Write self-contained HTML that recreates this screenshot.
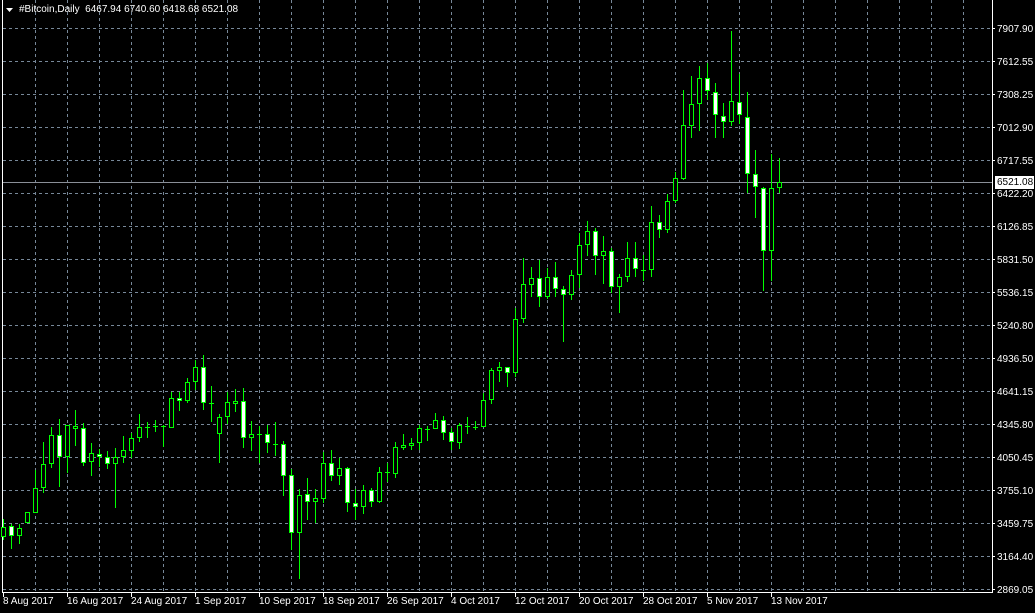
<!DOCTYPE html>
<html><head><meta charset="utf-8"><style>
html,body{margin:0;padding:0;background:#000;width:1035px;height:613px;overflow:hidden;}
body{position:relative;font-family:"Liberation Sans",Arial,sans-serif;font-size:10px;color:#fff;}
.t{position:absolute;white-space:nowrap;line-height:12px;}
.p{left:997px;margin-top:2px;}
.d{top:596px;}
</style></head><body>
<svg width="1035" height="613" style="position:absolute;left:0;top:0" xmlns="http://www.w3.org/2000/svg">
<g stroke="#778899" stroke-width="1" stroke-dasharray="3,3" fill="none">
<path d="M35.5 0V592M67.5 0V592M99.5 0V592M131.5 0V592M163.5 0V592M195.5 0V592M227.5 0V592M259.5 0V592M291.5 0V592M323.5 0V592M355.5 0V592M387.5 0V592M419.5 0V592M451.5 0V592M483.5 0V592M515.5 0V592M547.5 0V592M579.5 0V592M611.5 0V592M643.5 0V592M675.5 0V592M707.5 0V592M739.5 0V592M771.5 0V592M803.5 0V592M835.5 0V592M867.5 0V592M899.5 0V592M931.5 0V592M963.5 0V592"/>
<path d="M3 28.5H992M3 61.5H992M3 94.5H992M3 127.5H992M3 160.5H992M3 193.5H992M3 226.5H992M3 259.5H992M3 292.5H992M3 325.5H992M3 358.5H992M3 391.5H992M3 424.5H992M3 457.5H992M3 490.5H992M3 523.5H992M3 556.5H992M3 589.5H992"/>
</g>
<path d="M3 182.5H992" stroke="#8a8f98" stroke-width="1"/>
<g stroke="#fff" stroke-width="1" fill="none">
<path d="M2.5 0V592.5H992.5V0"/>
<path d="M992 28.5h3M992 61.5h3M992 94.5h3M992 127.5h3M992 160.5h3M992 193.5h3M992 226.5h3M992 259.5h3M992 292.5h3M992 325.5h3M992 358.5h3M992 391.5h3M992 424.5h3M992 457.5h3M992 490.5h3M992 523.5h3M992 556.5h3M992 589.5h3"/>
<path d="M3.5 592V597M67.5 592V597M131.5 592V597M195.5 592V597M259.5 592V597M323.5 592V597M387.5 592V597M451.5 592V597M515.5 592V597M579.5 592V597M643.5 592V597M707.5 592V597M771.5 592V597"/>
</g>
<path d="M6 8h7l-3.5 4z" fill="#fff"/>
<g stroke="#00ff00" stroke-width="1" fill="none">
<path d="M3.5 519V540M11.5 524V549M19.5 524V544M27.5 512V523M35.5 470V513M43.5 442V493M51.5 427V468M59.5 419V487M67.5 425V473M75.5 410V446M83.5 423V466M91.5 443V476M99.5 449V467M107.5 451V469M115.5 448V508M123.5 436V463M131.5 433V458M139.5 414V442M147.5 422V438M155.5 420V432M163.5 425V447M171.5 392V428M179.5 392V411M187.5 378V403M195.5 360V390M203.5 355V410M211.5 386V422M219.5 414V463M227.5 392V424M235.5 389V412M243.5 388V448M251.5 421V451M259.5 426V463M267.5 425V453M275.5 422V456M283.5 441V496M291.5 469V550M299.5 489V579M307.5 478V520M315.5 489V523M323.5 452V503M331.5 450V481M339.5 458V485M347.5 467V512M355.5 489V520M363.5 485V514M371.5 488V507M379.5 467V503M387.5 463V482M395.5 442V478M403.5 434V450M411.5 438V450M419.5 425V450M427.5 426V441M435.5 413V429M443.5 416V440M451.5 428V450M459.5 423V449M467.5 417V434M475.5 421V430M483.5 393V427M491.5 368V404M499.5 362V382M507.5 367V387M515.5 308V377M523.5 258V323M531.5 267V297M539.5 260V307M547.5 268V299M555.5 262V297M563.5 286V342M571.5 270V300M579.5 233V288M587.5 221V256M595.5 228V275M603.5 236V284M611.5 248V293M619.5 274V313M627.5 242V282M635.5 242V277M643.5 255V281M651.5 206V277M659.5 215V238M667.5 194V233M675.5 172V203M683.5 90V180M691.5 76V138M699.5 66V131M707.5 63V100M715.5 83V138M723.5 103V138M731.5 31V126M739.5 74V124M747.5 92V193M755.5 150V218M763.5 187V291M771.5 154V281M779.5 158V193"/>
<path d="M145 427.5h5M153 426.5h5M161 426.5h5M209 403.5h5M257 434.5h5M273 444.5h5M385 472.5h5M425 429.5h5M465 426.5h5M473 427.5h5M641 270.5h5"/>
<path fill="#000" d="M1.5 527.5h4v9h-4zM17.5 528.5h4v7h-4zM25.5 512.5h4v10h-4zM33.5 488.5h4v24h-4zM41.5 464.5h4v23h-4zM49.5 435.5h4v28h-4zM65.5 425.5h4v31h-4zM73.5 426.5h4v2h-4zM89.5 453.5h4v8h-4zM113.5 457.5h4v6h-4zM121.5 450.5h4v6h-4zM129.5 438.5h4v12h-4zM137.5 427.5h4v10h-4zM169.5 398.5h4v29h-4zM185.5 382.5h4v18h-4zM193.5 367.5h4v14h-4zM217.5 417.5h4v16h-4zM225.5 402.5h4v14h-4zM233.5 401.5h4v2h-4zM249.5 434.5h4v3h-4zM297.5 495.5h4v37h-4zM313.5 498.5h4v3h-4zM321.5 463.5h4v35h-4zM337.5 468.5h4v7h-4zM361.5 490.5h4v16h-4zM377.5 472.5h4v29h-4zM393.5 447.5h4v26h-4zM401.5 445.5h4v2h-4zM409.5 443.5h4v2h-4zM417.5 428.5h4v14h-4zM433.5 420.5h4v8h-4zM457.5 425.5h4v17h-4zM481.5 400.5h4v26h-4zM489.5 370.5h4v29h-4zM497.5 367.5h4v3h-4zM513.5 319.5h4v53h-4zM521.5 284.5h4v34h-4zM529.5 278.5h4v6h-4zM545.5 277.5h4v19h-4zM569.5 275.5h4v19h-4zM577.5 245.5h4v29h-4zM585.5 231.5h4v13h-4zM601.5 251.5h4v4h-4zM617.5 277.5h4v9h-4zM625.5 258.5h4v18h-4zM649.5 222.5h4v47h-4zM665.5 201.5h4v28h-4zM673.5 178.5h4v22h-4zM681.5 125.5h4v53h-4zM689.5 104.5h4v21h-4zM697.5 78.5h4v25h-4zM729.5 101.5h4v20h-4zM769.5 188.5h4v62h-4zM777.5 182.5h4v5h-4z"/>
<path fill="#fff" d="M9.5 526.5h4v9h-4zM57.5 435.5h4v21h-4zM81.5 428.5h4v34h-4zM97.5 454.5h4v2h-4zM105.5 457.5h4v6h-4zM177.5 398.5h4v2h-4zM201.5 367.5h4v35h-4zM241.5 401.5h4v36h-4zM265.5 434.5h4v8h-4zM281.5 444.5h4v31h-4zM289.5 475.5h4v57h-4zM305.5 494.5h4v7h-4zM329.5 463.5h4v12h-4zM345.5 468.5h4v34h-4zM353.5 503.5h4v3h-4zM369.5 490.5h4v11h-4zM441.5 420.5h4v12h-4zM449.5 432.5h4v9h-4zM505.5 367.5h4v5h-4zM537.5 278.5h4v18h-4zM553.5 277.5h4v11h-4zM561.5 289.5h4v5h-4zM593.5 231.5h4v24h-4zM609.5 251.5h4v35h-4zM633.5 258.5h4v10h-4zM657.5 222.5h4v7h-4zM705.5 78.5h4v12h-4zM713.5 92.5h4v22h-4zM721.5 116.5h4v5h-4zM737.5 102.5h4v12h-4zM745.5 117.5h4v56h-4zM753.5 174.5h4v12h-4zM761.5 188.5h4v62h-4z"/>
</g>
<rect x="995" y="176" width="39" height="13" fill="#fff"/>
</svg>
<div class="t" style="left:19px;top:4px;">#Bitcoin,Daily&nbsp;&nbsp;6467.94 6740.60 6418.68 6521.08</div>
<div class="t p" style="top:22px">7907.90</div>
<div class="t p" style="top:55px">7612.55</div>
<div class="t p" style="top:88px">7308.25</div>
<div class="t p" style="top:121px">7012.90</div>
<div class="t p" style="top:154px">6717.55</div>
<div class="t p" style="top:175px;color:#000">6521.08</div>
<div class="t p" style="top:187px">6422.20</div>
<div class="t p" style="top:220px">6126.85</div>
<div class="t p" style="top:253px">5831.50</div>
<div class="t p" style="top:286px">5536.15</div>
<div class="t p" style="top:319px">5240.80</div>
<div class="t p" style="top:352px">4936.50</div>
<div class="t p" style="top:385px">4641.15</div>
<div class="t p" style="top:418px">4345.80</div>
<div class="t p" style="top:451px">4050.45</div>
<div class="t p" style="top:484px">3755.10</div>
<div class="t p" style="top:517px">3459.75</div>
<div class="t p" style="top:550px">3164.40</div>
<div class="t p" style="top:583px">2869.05</div>
<div class="t d" style="left:3px">8 Aug 2017</div>
<div class="t d" style="left:67px">16 Aug 2017</div>
<div class="t d" style="left:131px">24 Aug 2017</div>
<div class="t d" style="left:195px">1 Sep 2017</div>
<div class="t d" style="left:259px">10 Sep 2017</div>
<div class="t d" style="left:323px">18 Sep 2017</div>
<div class="t d" style="left:387px">26 Sep 2017</div>
<div class="t d" style="left:451px">4 Oct 2017</div>
<div class="t d" style="left:515px">12 Oct 2017</div>
<div class="t d" style="left:579px">20 Oct 2017</div>
<div class="t d" style="left:643px">28 Oct 2017</div>
<div class="t d" style="left:707px">5 Nov 2017</div>
<div class="t d" style="left:771px">13 Nov 2017</div>
</body></html>
